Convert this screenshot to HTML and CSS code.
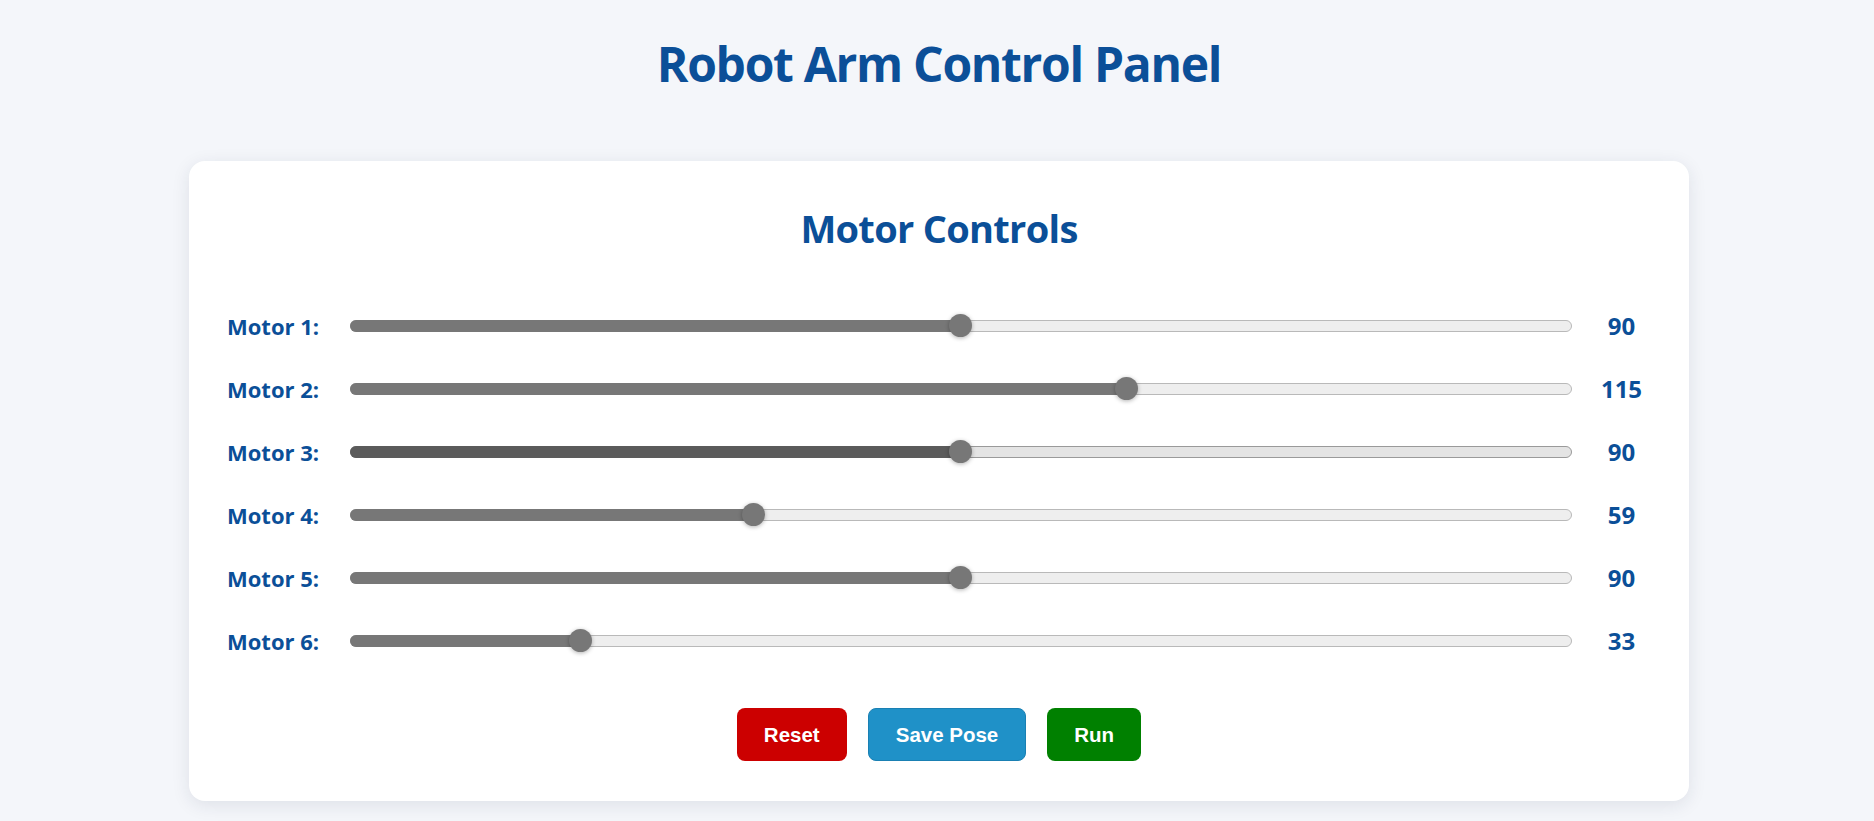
FILE: index.html
```html
<!DOCTYPE html>
<html lang="en">
<head>
<meta charset="utf-8">
<title>Robot Arm Control Panel</title>
<link rel="stylesheet" href="styles.css">
</head>
<body>
<h1 class="page-title">Robot Arm Control Panel</h1>
<main class="card">
  <h2 class="card-title">Motor Controls</h2>
  <div class="motor-list">
    <div class="motor-row">
      <span class="motor-label">Motor 1:</span>
      <div class="slider" style="--p:0.5"><div class="slider-fill"></div><div class="slider-thumb"></div></div>
      <span class="motor-value">90</span>
    </div>
    <div class="motor-row">
      <span class="motor-label">Motor 2:</span>
      <div class="slider" style="--p:0.6389"><div class="slider-fill"></div><div class="slider-thumb"></div></div>
      <span class="motor-value">115</span>
    </div>
    <div class="motor-row">
      <span class="motor-label">Motor 3:</span>
      <div class="slider slider-active" style="--p:0.5"><div class="slider-fill"></div><div class="slider-thumb"></div></div>
      <span class="motor-value">90</span>
    </div>
    <div class="motor-row">
      <span class="motor-label">Motor 4:</span>
      <div class="slider" style="--p:0.3278"><div class="slider-fill"></div><div class="slider-thumb"></div></div>
      <span class="motor-value">59</span>
    </div>
    <div class="motor-row">
      <span class="motor-label">Motor 5:</span>
      <div class="slider" style="--p:0.5"><div class="slider-fill"></div><div class="slider-thumb"></div></div>
      <span class="motor-value">90</span>
    </div>
    <div class="motor-row">
      <span class="motor-label">Motor 6:</span>
      <div class="slider" style="--p:0.1833"><div class="slider-fill"></div><div class="slider-thumb"></div></div>
      <span class="motor-value">33</span>
    </div>
  </div>
  <div class="actions">
    <button class="btn btn-reset">Reset</button>
    <button class="btn btn-save">Save Pose</button>
    <button class="btn btn-run">Run</button>
  </div>
</main>
</body>
</html>
```
FILE: styles.css
```css
* { box-sizing: border-box; }

html, body {
  margin: 0;
  padding: 0;
}

body {
  background: #f4f6fa;
  font-family: "Open Sans", "Noto Sans", sans-serif;
  color: #0b4f98;
  padding: 34px 0 20px 4px;
}

.page-title {
  margin: 0;
  text-align: center;
  font-size: 48px;
  line-height: 60px;
  font-weight: 700;
  letter-spacing: -1.3px;
  color: #0b4f98;
}

.card {
  display: block;
  width: 1500px;
  margin: 67px auto 0;
  background: #ffffff;
  border-radius: 16px;
  box-shadow: 0 4px 18px rgba(30, 40, 70, 0.10);
  padding: 44px 38px 40px;
}

.card-title {
  margin: 0 0 43px;
  text-align: center;
  font-size: 38px;
  line-height: 46px;
  font-weight: 700;
  letter-spacing: -0.7px;
  color: #0b4f98;
}

.motor-list {
  display: flex;
  flex-direction: column;
}

.motor-row {
  display: flex;
  align-items: center;
  height: 63px;
  gap: 20px;
}

.motor-label {
  width: 103px;
  flex: 0 0 103px;
  font-size: 22px;
  font-weight: 700;
  white-space: nowrap;
  color: #0b4f98;
}

.slider {
  position: relative;
  flex: 1;
  height: 12px;
  border: 1px solid #b9b9b9;
  border-radius: 6px;
  background: #eeeeee;
}

.slider-fill {
  position: absolute;
  left: -1px;
  top: -1px;
  height: 12px;
  width: calc(12.5px + var(--p) * (100% - 23px));
  background: #777777;
  border-radius: 6px;
}

.slider-thumb {
  position: absolute;
  top: 50%;
  left: calc(11.5px + var(--p) * (100% - 23px));
  width: 23px;
  height: 23px;
  margin: -11.5px 0 0 -12.5px;
  border-radius: 50%;
  background: #777777;
  box-shadow: 0 1px 4px rgba(0, 0, 0, 0.3);
}

.slider-active {
  background: #e4e4e4;
  border-color: #9a9a9a;
}

.slider-active .slider-fill {
  background: #5b5b5b;
}

.motor-value {
  width: 59px;
  flex: 0 0 59px;
  text-align: center;
  font-size: 24px;
  font-weight: 700;
  color: #0b4f98;
}

.actions {
  display: flex;
  justify-content: center;
  gap: 21px;
  margin-top: 36px;
}

.btn {
  height: 53px;
  padding: 0 27px;
  border: none;
  border-radius: 8px;
  color: #ffffff;
  font-family: "Liberation Sans", Arial, sans-serif;
  font-size: 20.5px;
  font-weight: 700;
  cursor: pointer;
}

.btn-reset { background: #cc0000; }
.btn-save { background: #1f91c8; border: 1px solid #1a80b3; }
.btn-run { background: #008000; }
```
